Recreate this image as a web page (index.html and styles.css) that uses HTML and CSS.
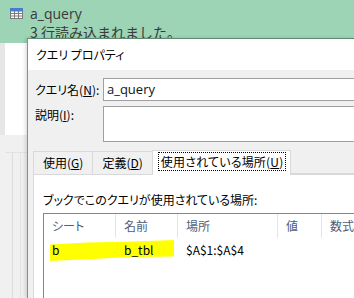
FILE: index.html
```html
<!DOCTYPE html>
<html lang="ja">
<head>
    <meta charset="UTF-8">
    <title>クエリ プロパティ</title>
    <link rel="stylesheet" href="styles.css">
</head>
<body>

<!-- Background workbook pane -->
<div class="app">
    <div class="banner">
        <div class="banner-title">
            <svg class="table-icon" width="13" height="11" viewBox="0 0 13 11">
                <rect x="0.5" y="0.5" width="12" height="10" fill="#fff" stroke="#7a7a7a"/>
                <rect x="0.5" y="0.5" width="12" height="2.5" fill="#4a7cc9" stroke="#4a7cc9"/>
                <path d="M4.5 3v7.5M8.5 3v7.5M0.5 5.5h12M0.5 8h12" stroke="#7a7a7a" stroke-width="1"/>
            </svg>
            <span>a_query</span>
        </div>
        <div class="banner-status">3 行読み込まれました。</div>
    </div>
    <div class="pane">
        <div class="pane-edge"></div>
        <div class="pane-white"></div>
    </div>
    <div class="pane-lower">
        <div class="pane-grid"></div>
    </div>
</div>

<!-- Query properties dialog -->
<div class="dialog">
    <div class="dialog-title">クエリ プロパティ</div>
    <div class="dialog-body">
        <div class="form-row">
            <label class="form-label">クエリ名(<u>N</u>):</label>
            <div class="text-box">a_query</div>
        </div>
        <div class="form-row top">
            <label class="form-label">説明(<u>I</u>):</label>
            <div class="text-area"></div>
        </div>

        <div class="tabs">
            <div class="tab">使用(<u>G</u>)</div>
            <div class="tab">定義(<u>D</u>)</div>
            <div class="tab active"><span class="focus">使用されている場所(<u>U</u>)</span></div>
            <div class="tab-fill"></div>
        </div>

        <div class="tab-panel">
            <p class="panel-caption">ブックでこのクエリが使用されている場所:</p>
            <div class="list">
                <div class="list-head">
                    <div class="col c-sheet">シート</div>
                    <div class="col c-name">名前</div>
                    <div class="col c-place">場所</div>
                    <div class="col c-value">値</div>
                    <div class="col c-formula">数式</div>
                </div>
                <div class="list-row">
                    <div class="marker"></div>
                    <div class="col c-sheet">b</div>
                    <div class="col c-name">b_tbl</div>
                    <div class="col c-place">$A$1:$A$4</div>
                    <div class="col c-value"></div>
                    <div class="col c-formula"></div>
                </div>
            </div>
        </div>
    </div>
</div>

</body>
</html>
```

FILE: styles.css
```css
/* Page */
body {
    margin: 0;
    width: 354px;
    height: 298px;
    overflow: hidden;
    position: relative;
    background: #f0f0f0;
    font-family: "Noto Sans CJK JP", "Noto Sans", sans-serif;
    font-feature-settings: "palt";
    font-size: 12px;
    color: #000;
}

/* Background pane (behind the dialog) */
.banner {
    height: 43px;
    background: #9dd4b5;
    padding-left: 10px;
    box-sizing: border-box;
    color: #3a3a3a;
    font-size: 14px;
}

.banner-title {
    display: flex;
    align-items: center;
    gap: 7px;
    height: 22px;
    padding-top: 2px;
}

.banner-title span {
    font-family: "Open Sans", sans-serif;
    font-size: 14px;
}

.banner-status {
    margin-left: 20px;
    line-height: 16px;
    font-feature-settings: normal;
    font-size: 14px;
}

.pane {
    display: flex;
    height: 92px;
}

.pane-edge {
    width: 5px;
    background: #e6e6e6;
}

.pane-white {
    flex: 1;
    background: #fff;
}

.pane-lower {
    height: 163px;
    padding-top: 17px;
    box-sizing: border-box;
}

.pane-grid {
    height: 100%;
    border-top: 1px solid #e2e2e2;
    margin-left: 5px;
    background:
        linear-gradient(#dcdcdc, #dcdcdc) 7px 0 / 1px 100% no-repeat,
        linear-gradient(#e4e4e4, #e4e4e4) 15px 0 / 1px 100% no-repeat,
        #f0f0f0;
}

/* Dialog */
.dialog {
    position: absolute;
    left: 27px;
    top: 38px;
    width: 326px;
    height: 259px;
    overflow: hidden;
    background: #f0f0f0;
    border-left: 1px solid #8c8c8c;
    border-top: 1px solid #5f8a70;
    box-shadow: -2px 0 3px rgba(0, 0, 0, 0.12);
}

.dialog-title {
    height: 31px;
    line-height: 31px;
    background: #fff;
    padding-left: 8px;
}

.dialog-body {
    padding: 8px 0 0 7px;
}

.form-row {
    display: flex;
    align-items: center;
    margin-bottom: 5px;
    margin-right: -4px;
}

.form-row.top {
    align-items: flex-start;
}

.form-label {
    width: 68px;
    flex-shrink: 0;
}

.text-box {
    flex: 1;
    height: 21px;
    line-height: 20px;
    background: #fff;
    border: 1px solid #a0a0a0;
    padding-left: 3px;
    font-family: "Open Sans", sans-serif;
    font-size: 13px;
    color: #111;
}

.text-area {
    flex: 1;
    height: 34px;
    background: #fff;
    border: 1px solid #a0a0a0;
}

/* Tabs */
.tabs {
    display: flex;
    align-items: flex-end;
    margin-top: 7px;
    margin-left: -2px;
    height: 25px;
}

.tab {
    height: 22px;
    line-height: 22px;
    padding: 0 9px;
    border: 1px solid #d9d9d9;
    border-bottom: none;
    border-right: none;
    background: #f0f0f0;
}

.tab.active {
    height: 24px;
    line-height: 22px;
    background: #fff;
    border-right: 1px solid #d9d9d9;
    padding: 0 5px 0 6px;
    position: relative;
    top: 1px;
    letter-spacing: 0.2px;
}

.focus {
    outline: 1px dotted #000;
    outline-offset: 0;
    padding: 0 2px;
}

.tab-fill {
    flex: 1;
    border-bottom: 1px solid #d9d9d9;
}

.tab-panel {
    height: 110px;
    margin-left: -2px;
    margin-right: -4px;
    background: #fff;
    border: 1px solid #d9d9d9;
    padding: 17px 0 0 9px;
}

.panel-caption {
    margin: 0 0 5px;
    line-height: 16px;
}

/* List view */
.list {
    border: 1px solid #828790;
    border-right: none;
    height: 90px;
    background: #fff;
}

.list-head,
.list-row {
    display: flex;
    position: relative;
}

.list-head {
    height: 24px;
    align-items: center;
    color: #4c607a;
}

.list-head .col {
    border-right: 1px solid #e5e5e5;
    line-height: 24px;
}

.list-row {
    height: 22px;
    align-items: center;
}

.col {
    padding-left: 8px;
    box-sizing: border-box;
    position: relative;
    flex-shrink: 0;
}

.c-sheet { width: 72px; }
.c-name { width: 62px; }
.c-place { width: 100px; }
.c-value { width: 44px; }
.c-formula { width: 60px; }

/* Yellow hand-drawn highlight */
.marker {
    position: absolute;
    left: 6px;
    top: 2px;
    width: 124px;
    height: 21px;
    background: #ffff00;
    clip-path: polygon(0 22%, 30% 12%, 62% 8%, 100% 0, 100% 78%, 62% 82%, 30% 92%, 0 100%);
}
```
